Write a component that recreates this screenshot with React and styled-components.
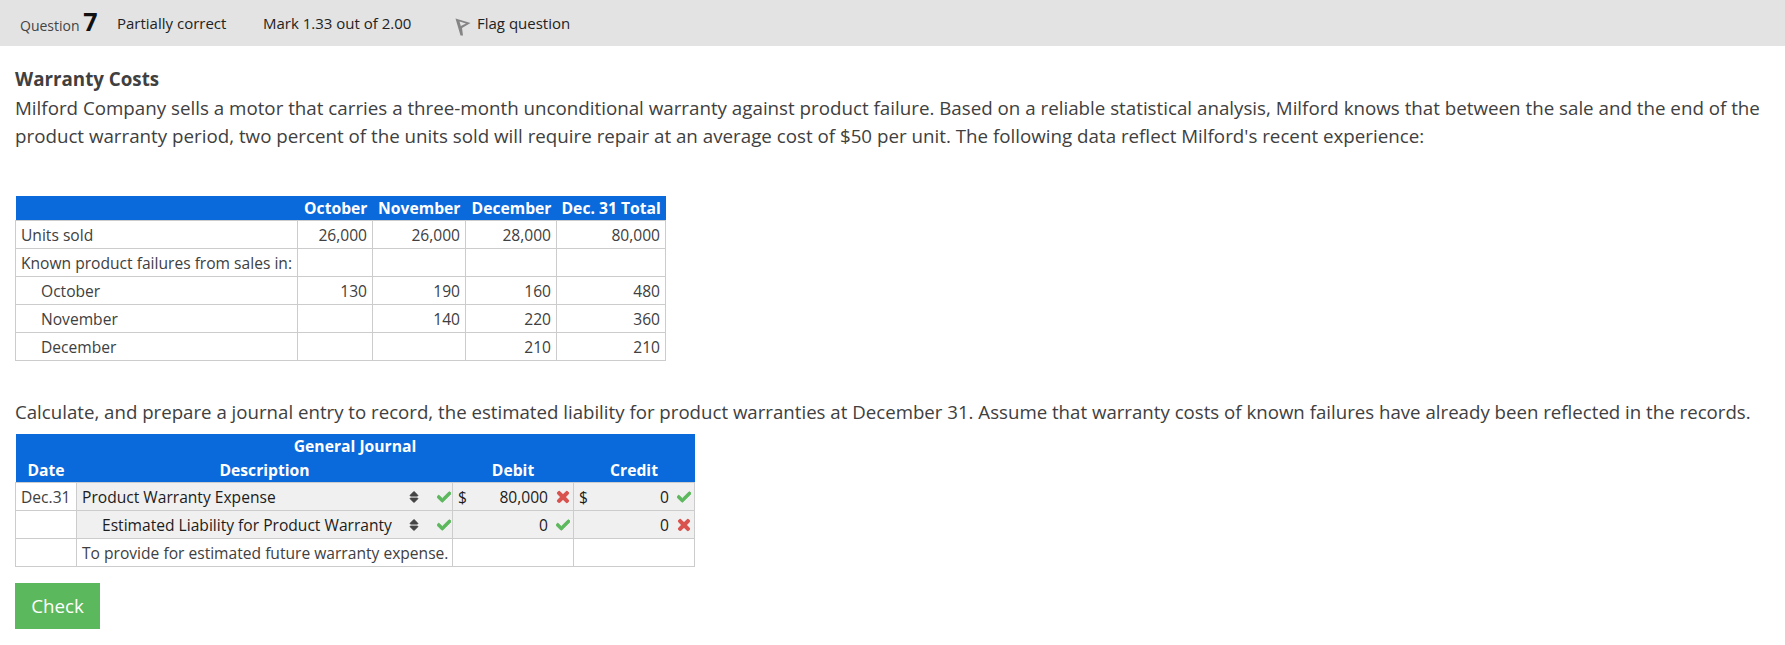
import React from 'react'
import styled, { createGlobalStyle } from 'styled-components'
import { FaCheck, FaTimes, FaSort } from 'react-icons/fa'

const GlobalStyle = createGlobalStyle`
  html, body { margin: 0; padding: 0; background: #fff; }
  body { font-family: "Open Sans", "Liberation Sans", sans-serif; color: #404040; }
`

const salesColumns = [282, 75, 93, 91, 109]
const salesRows = [
  { label: 'Units sold', values: ['26,000', '26,000', '28,000', '80,000'] },
  { label: 'Known product failures from sales in:', values: ['', '', '', ''] },
  { label: 'October', indent: true, values: ['130', '190', '160', '480'] },
  { label: 'November', indent: true, values: ['', '140', '220', '360'] },
  { label: 'December', indent: true, values: ['', '', '210', '210'] },
]

const journalColumns = [61, 376, 121, 121]

function Mark({ ok }) {
  return ok ? (
    <MarkSlot $color="#5cb85c" $size={14}><FaCheck /></MarkSlot>
  ) : (
    <MarkSlot $color="#d9534f" $size={16}><FaTimes /></MarkSlot>
  )
}

function Flag() {
  return (
    <FlagIcon viewBox="0 0 16 18">
      <path
        fillRule="evenodd"
        d="M0.5 0.5 L15.5 5 L7 10 L8 17.5 L5.5 17.5 Z M4.5 3.5 L5.8 8 L11 5.4 Z"
        fill="#858585"
      />
    </FlagIcon>
  )
}

export default function App() {
  return (
    <>
      <GlobalStyle />
      <InfoBar>
        <QuestionNo>Question <b>7</b></QuestionNo>
        <State>Partially correct</State>
        <Grade>Mark 1.33 out of 2.00</Grade>
        <FlagLink><Flag />Flag question</FlagLink>
      </InfoBar>
      <Content>
        <Title>Warranty Costs</Title>
        <Para>
          Milford Company sells a motor that carries a three-month unconditional warranty against product failure. Based on a reliable statistical analysis, Milford knows that between the sale and the end of the product warranty period, two percent of the units sold will require repair at an average cost of $50 per unit. The following data reflect Milford's recent experience:
        </Para>
        <SalesTable>
          <colgroup>
            {salesColumns.map((w, i) => <col key={i} width={w} />)}
          </colgroup>
          <thead>
            <tr>
              <HeadCell />
              <HeadCell $right>October</HeadCell>
              <HeadCell $right>November</HeadCell>
              <HeadCell $right>December</HeadCell>
              <HeadCell $right>Dec. 31 Total</HeadCell>
            </tr>
          </thead>
          <tbody>
            {salesRows.map((row) => (
              <tr key={row.label}>
                <Cell $indent={row.indent}>{row.label}</Cell>
                {row.values.map((v, i) => <Cell key={i} $right>{v}</Cell>)}
              </tr>
            ))}
          </tbody>
        </SalesTable>
        <Prompt>
          Calculate, and prepare a journal entry to record, the estimated liability for product warranties at December 31. Assume that warranty costs of known failures have already been reflected in the records.
        </Prompt>
        <JournalTable>
          <colgroup>
            {journalColumns.map((w, i) => <col key={i} width={w} />)}
          </colgroup>
          <thead>
            <tr>
              <JournalHead colSpan={4} $title>General Journal</JournalHead>
            </tr>
            <tr>
              <JournalHead>Date</JournalHead>
              <JournalHead>Description</JournalHead>
              <JournalHead>Debit</JournalHead>
              <JournalHead>Credit</JournalHead>
            </tr>
          </thead>
          <tbody>
            <tr>
              <Cell>Dec.31</Cell>
              <Cell $shaded>
                <Answer>
                  <span>Product Warranty Expense</span>
                  <Controls><Stepper><FaSort /></Stepper><Mark ok /></Controls>
                </Answer>
              </Cell>
              <Cell $shaded>
                <Amount><span>$</span><AmountValue>80,000<Mark /></AmountValue></Amount>
              </Cell>
              <Cell $shaded>
                <Amount><span>$</span><AmountValue>0<Mark ok /></AmountValue></Amount>
              </Cell>
            </tr>
            <tr>
              <Cell />
              <Cell $shaded>
                <Answer $indent>
                  <span>Estimated Liability for Product Warranty</span>
                  <Controls><Stepper><FaSort /></Stepper><Mark ok /></Controls>
                </Answer>
              </Cell>
              <Cell $shaded>
                <Amount><span /><AmountValue>0<Mark ok /></AmountValue></Amount>
              </Cell>
              <Cell $shaded>
                <Amount><span /><AmountValue>0<Mark /></AmountValue></Amount>
              </Cell>
            </tr>
            <tr>
              <Cell />
              <Cell>To provide for estimated future warranty expense.</Cell>
              <Cell />
              <Cell />
            </tr>
          </tbody>
        </JournalTable>
        <CheckButton>Check</CheckButton>
      </Content>
    </>
  )
}

const InfoBar = styled.div`
  height: 46px;
  background: #e3e3e3;
  display: flex;
  align-items: center;
  font-size: 15px;
  color: #222;
`
const QuestionNo = styled.div`
  margin-left: 20px;
  margin-bottom: 3px;
  width: 97px;
  font-size: 14px;
  color: #444;
  b {
    font-size: 25px;
    line-height: 24px;
    color: #111;
  }
`
const State = styled.div`
  width: 146px;
`
const Grade = styled.div`
  width: 192px;
`
const FlagLink = styled.div`
  display: flex;
  align-items: center;
  gap: 6px;
`
const FlagIcon = styled.svg`
  width: 16px;
  height: 18px;
  margin-top: 8px;
`
const Content = styled.div`
  padding: 19px 10px 0 15px;
`
const Title = styled.div`
  font-size: 18.75px;
  line-height: 28px;
  margin-bottom: 1px;
  font-weight: 700;
`
const Para = styled.p`
  margin: 0;
  font-size: 18.75px;
  line-height: 28px;
`
const SalesTable = styled.table`
  border-collapse: collapse;
  table-layout: fixed;
  width: 650px;
  margin-top: 46px;
  font-size: 15.6px;
`
const HeadCell = styled.th`
  height: 24px;
  padding: 0 5px;
  background: #0a69db;
  color: #fff;
  font-weight: 700;
  font-size: 15.7px;
  line-height: 22px;
  white-space: nowrap;
  text-align: ${(p) => (p.$right ? 'right' : 'left')};
`
const Cell = styled.td`
  height: 27px;
  padding: 0 5px 0 ${(p) => (p.$indent ? '25px' : '5px')};
  border: 1px solid #ccc;
  line-height: 22px;
  white-space: nowrap;
  background: ${(p) => (p.$shaded ? '#f0f0f0' : '#fff')};
  text-align: ${(p) => (p.$right ? 'right' : 'left')};
  color: ${(p) => (p.$shaded ? '#1c1c1c' : '#404040')};
`
const Prompt = styled.p`
  margin: 37px 0 0;
  font-size: 18.67px;
  line-height: 28px;
`
const JournalTable = styled.table`
  border-collapse: collapse;
  table-layout: fixed;
  width: 679px;
  margin-top: 8px;
  font-size: 15.6px;
`
const JournalHead = styled.th`
  height: ${(p) => (p.$title ? '23px' : '25px')};
  padding: 0;
  background: #0a69db;
  color: #fff;
  font-weight: 700;
  font-size: 15.7px;
  line-height: 22px;
  text-align: center;
`
const Answer = styled.div`
  display: flex;
  align-items: center;
  justify-content: space-between;
  margin-right: -4px;
  padding-left: ${(p) => (p.$indent ? '20px' : '0')};
`
const Controls = styled.span`
  display: flex;
  align-items: center;
  gap: 8px;
`
const Stepper = styled.span`
  display: flex;
  font-size: 14px;
  color: #444;
  svg {
    stroke: currentColor;
    stroke-width: 24;
  }
`
const MarkSlot = styled.span`
  display: inline-flex;
  justify-content: center;
  width: 14px;
  margin-left: 8px;
  font-size: ${(p) => p.$size}px;
  color: ${(p) => p.$color};
  svg {
    stroke: currentColor;
    stroke-width: 36;
  }
`
const Amount = styled.div`
  display: flex;
  justify-content: space-between;
  align-items: center;
  margin-right: -2px;
`
const AmountValue = styled.span`
  display: flex;
  align-items: center;
`
const CheckButton = styled.button`
  display: block;
  width: 85px;
  height: 46px;
  margin-top: 16px;
  padding: 0 0 2px;
  border: 0;
  background: #5cb85c;
  color: #fff;
  font-family: inherit;
  font-size: 18.75px;
`
